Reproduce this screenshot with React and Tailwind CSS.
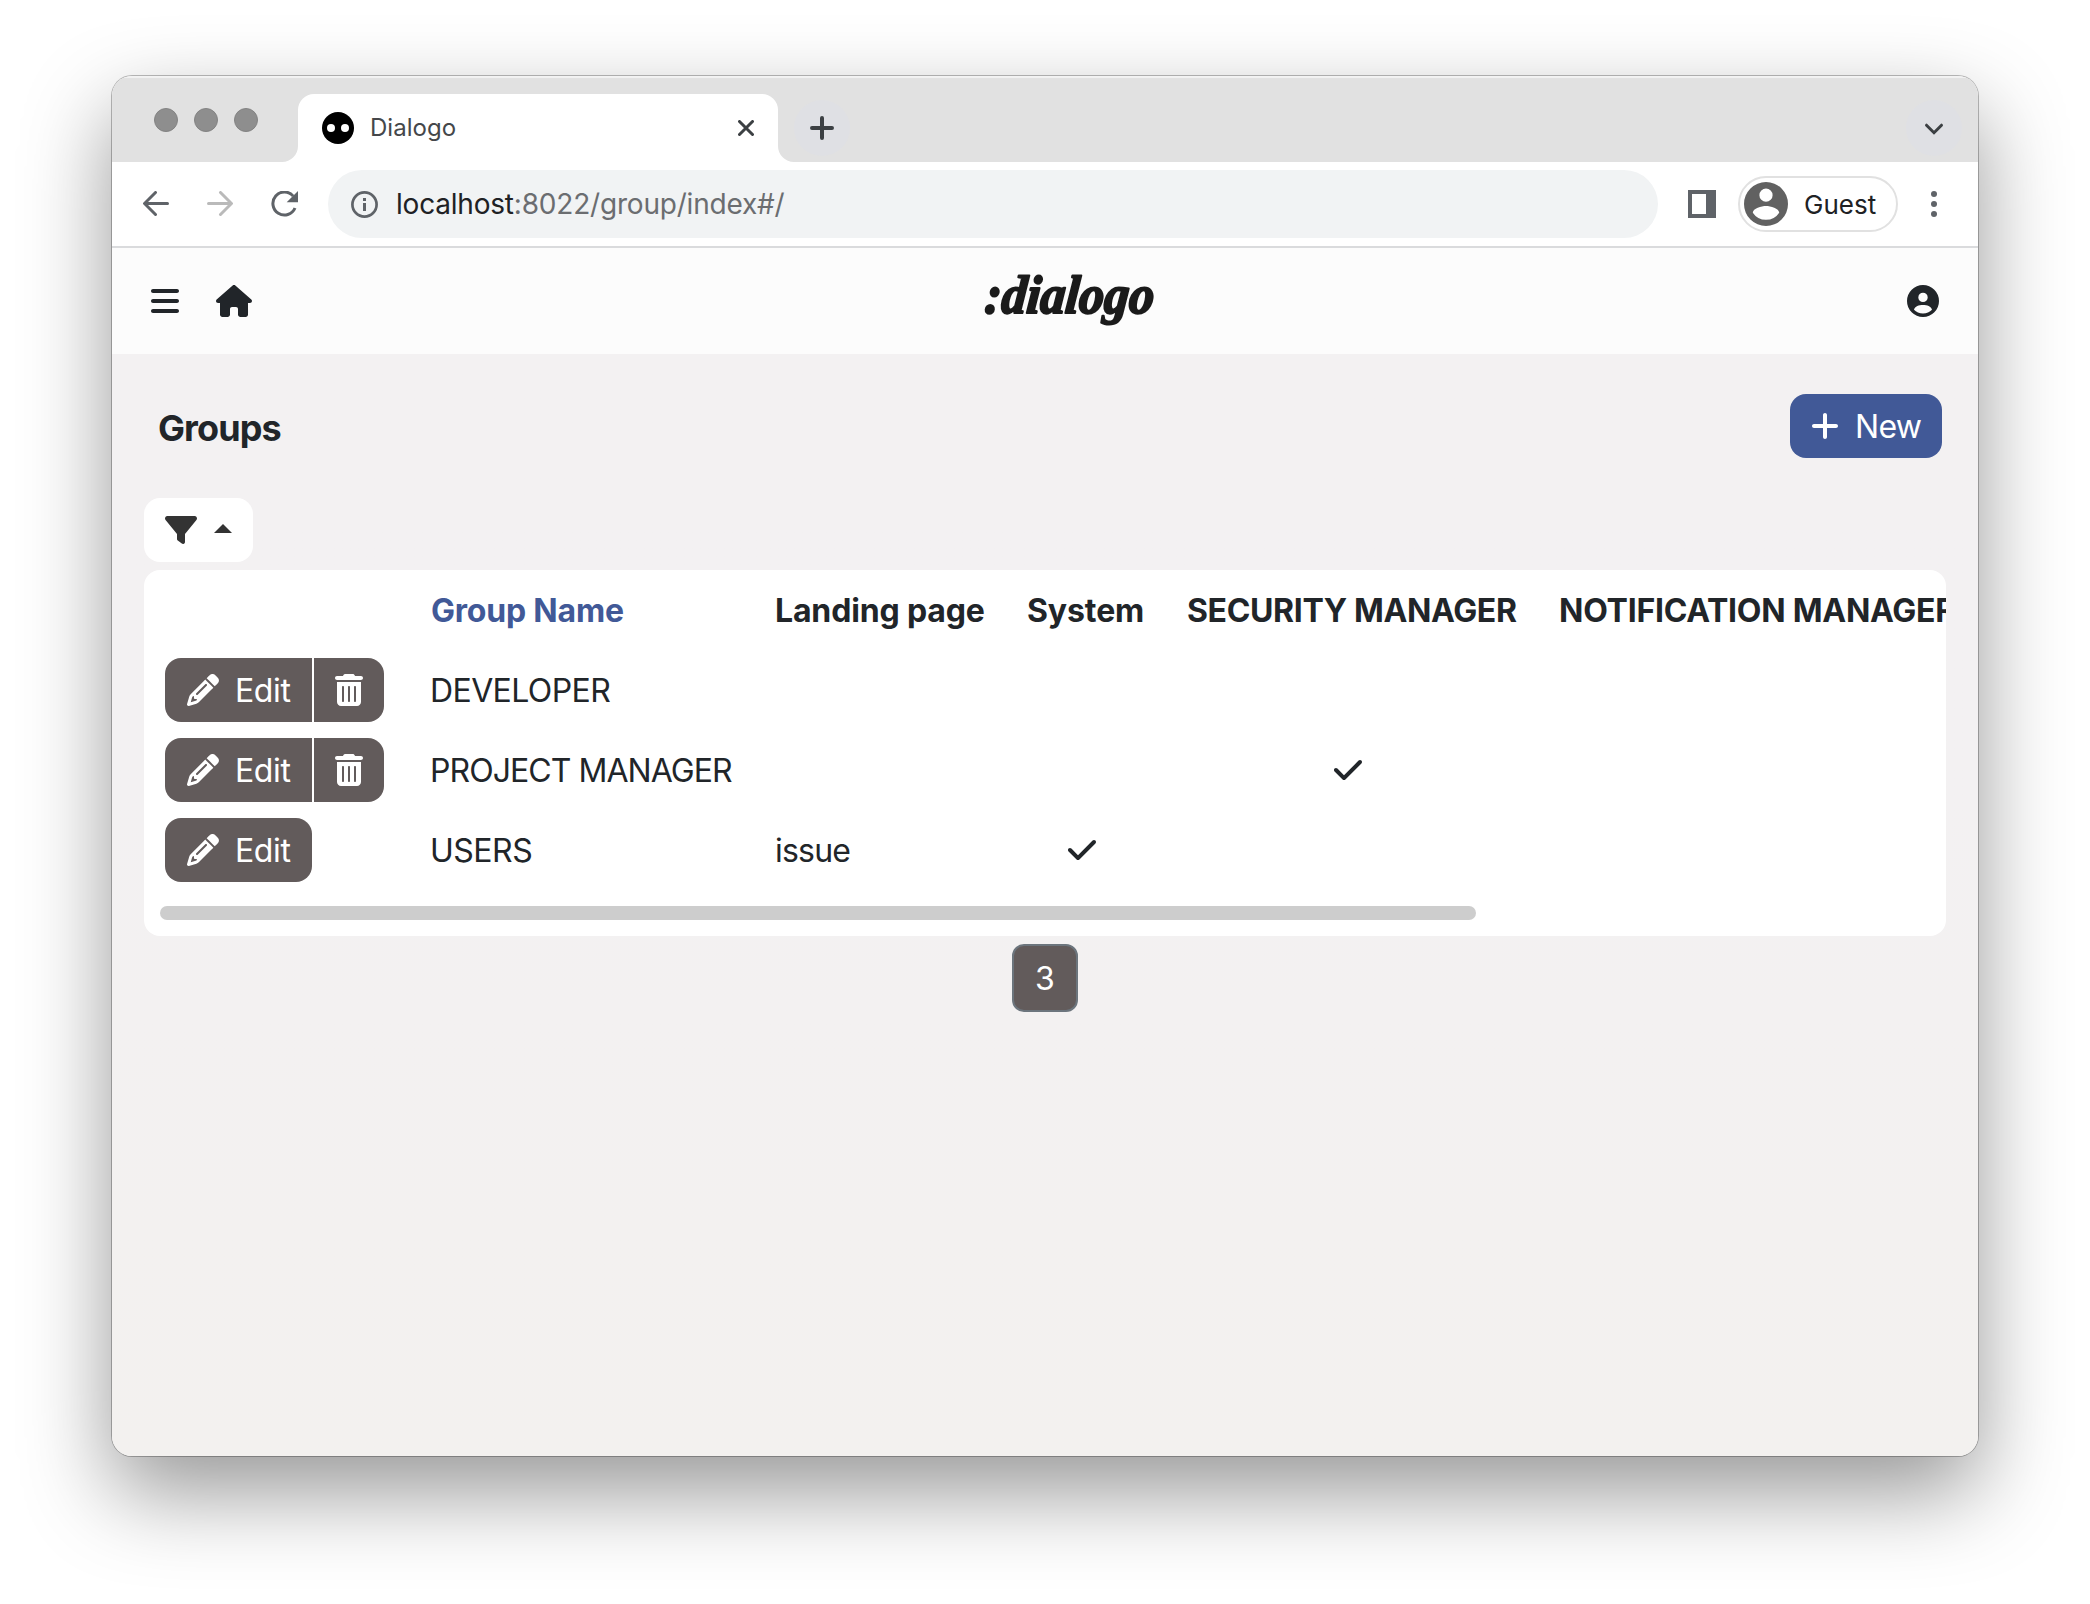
import React from "react";
import { FaBars, FaCheck, FaFilter, FaHouse, FaPencil, FaPlus, FaTrashCan } from "react-icons/fa6";

const COLUMNS = "grid grid-cols-[265px_345px_252px_160px_372px_420px] w-max h-20 items-center pl-[21px]";

const ROWS = [
  { name: "DEVELOPER", tracking: "tracking-[-0.6px]", removable: true },
  { name: "PROJECT MANAGER", tracking: "tracking-[-0.95px]", removable: true, security: true },
  { name: "USERS", tracking: "tracking-[-0.5px]", landing: "issue", system: true },
];

function TabStrip() {
  return (
    <div className="flex h-[86px] items-end bg-[#e1e1e1] pr-4 shadow-[inset_0_2px_1px_rgba(255,255,255,0.6)]">
      <div className="flex h-[86px] w-[170px] gap-4 pl-[42px] pt-8">
        <span className="size-6 rounded-full border border-[#838383] bg-[#8e8e8e]" />
        <span className="size-6 rounded-full border border-[#838383] bg-[#8e8e8e]" />
        <span className="size-6 rounded-full border border-[#838383] bg-[#8e8e8e]" />
      </div>
      <svg className="size-4 shrink-0" viewBox="0 0 16 16"><path d="M16 0v16H0A16 16 0 0 0 16 0z" fill="#fff" /></svg>
      <div className="flex h-[68px] w-[480px] items-center rounded-t-2xl bg-white px-6">
        <svg className="size-8" viewBox="0 0 32 32">
          <circle cx="16" cy="16" r="16" />
          <circle cx="9" cy="16" r="4" fill="#fff" />
          <circle cx="23" cy="16" r="4" fill="#fff" />
        </svg>
        <span className="-mt-px ml-4 text-[24px] leading-none tracking-[0.05px] text-[#45474a]">Dialogo</span>
        <svg className="ml-auto size-4" viewBox="0 0 16 16" fill="none" stroke="#3c4043" strokeWidth="3" strokeLinecap="round">
          <path d="M1.5 1.5l13 13M14.5 1.5l-13 13" />
        </svg>
      </div>
      <svg className="size-4 shrink-0" viewBox="0 0 16 16"><path d="M0 0v16h16A16 16 0 0 1 0 0z" fill="#fff" /></svg>
      <div className="mb-1.5 flex size-14 items-center justify-center rounded-full bg-[#dfe0e4]">
        <svg className="size-6" viewBox="0 0 24 24" fill="none" stroke="#3c4043" strokeWidth="4" strokeLinecap="round">
          <path d="M12 2v20M2 12h20" />
        </svg>
      </div>
      <div className="mb-1.5 ml-auto flex size-14 items-center justify-center rounded-full bg-[#dfe0e4]">
        <svg className="mt-px h-3 w-5" viewBox="0 0 20 12" fill="none" stroke="#3c4043" strokeWidth="3" strokeLinecap="round">
          <path d="M2.5 2.2l7.500 7.500 7.500-7.500" />
        </svg>
      </div>
    </div>
  );
}

function Toolbar() {
  return (
    <div className="flex h-[86px] items-center border-b-2 border-[#dadbdd] bg-white pl-[31px]">
      <svg className="size-[26px]" viewBox="0 0 26 26" fill="none" stroke="#5f6368" strokeWidth="3" strokeLinecap="round">
        <path d="M24.5 12.5h-22M12.5 1.5l-11 11 11 11" />
      </svg>
      <svg className="ml-[38px] size-[26px]" viewBox="0 0 26 26" fill="none" stroke="#bababa" strokeWidth="3" strokeLinecap="round">
        <path d="M1.5 12.5h22M13.5 1.5l11 11-11 11" />
      </svg>
      <svg className="ml-[38px] h-[26px] w-[27px]" viewBox="0 0 27 26">
        <path d="M22.2 5.1A11.5 11.5 0 1 0 24 17" fill="none" stroke="#5f6368" strokeWidth="3" />
        <path d="M27 0v11.3H15.7z" fill="#5f6368" />
      </svg>
      <div className="ml-[30px] flex h-[68px] w-[1330px] items-center rounded-full bg-[#f1f3f4] pl-[23px]">
        <svg className="size-[27px]" viewBox="0 0 27 27">
          <circle cx="13.5" cy="13.5" r="12.1" fill="none" stroke="#5f6368" strokeWidth="2.7" />
          <path d="M12 7h3v3h-3zM12 12h3v8h-3z" fill="#5f6368" />
        </svg>
        <span className="ml-[18px] text-[28px] leading-none tracking-[-0.2px] text-[#6b6d70]">
          <span className="text-[#202124]">localhost</span>:8022/group/index#/
        </span>
      </div>
      <svg className="ml-[30px] size-7" viewBox="0 0 28 28"><path fillRule="evenodd" d="M0 0h28v28H0zM4 4v20h14V4z" fill="#5f6368" /></svg>
      <div className="ml-[22px] flex h-14 w-40 items-center rounded-full border-2 border-[#e1e1e1] pl-1">
        <svg className="size-11" viewBox="2 2 20 20">
          <path fillRule="evenodd" fill="#616161" d="M12 2a10 10 0 1 0 0 20 10 10 0 0 0 0-20zm0 3a3 3 0 1 1 0 6 3 3 0 0 1 0-6zm0 14.2a7.2 7.2 0 0 1-6-3.22c.03-1.99 4-3.08 6-3.08s5.97 1.09 6 3.08a7.2 7.2 0 0 1-6 3.22z" />
        </svg>
        <span className="ml-4 mt-0.5 text-[26px] leading-none text-[#202124]">Guest</span>
      </div>
      <svg className="ml-[33px] h-[26px] w-1.5" viewBox="0 0 6 26" fill="#5f6368">
        <circle cx="3" cy="3" r="3" /><circle cx="3" cy="13" r="3" /><circle cx="3" cy="23" r="3" />
      </svg>
    </div>
  );
}

function AppHeader() {
  return (
    <header className="flex h-[106px] items-center justify-between bg-[#fcfcfc] px-[39px] text-[#212529]">
      <div className="flex items-center gap-[37px]">
        <FaBars className="h-8 w-7" />
        <FaHouse className="h-8 w-9" />
      </div>
      <svg className="h-[72px] w-[194px] overflow-visible" viewBox="0 0 194 72">
        <text x="5" y="47.500" transform="skewX(-5)" fontFamily="'Liberation Serif', serif" fontSize="54" fontWeight="700" fontStyle="italic" textLength="169" lengthAdjust="spacingAndGlyphs" fill="#1b1b1b" stroke="#1b1b1b" strokeWidth="2.2" strokeLinejoin="round">:dialogo</text>
      </svg>
      <svg className="size-8" viewBox="0 0 32 32">
        <path fillRule="evenodd" fill="#212529" d="M16 0a16 16 0 1 0 0 32 16 16 0 0 0 0-32zm0 7.7a4.7 4.7 0 1 1 0 9.4 4.7 4.7 0 0 1 0-9.4zm0 20.800c-3.600 0-6.800-1.400-9-3.800 1-3.300 4.800-4.700 9-4.700s8 1.400 9 4.700c-2.200 2.400-5.400 3.800-9 3.800z" />
      </svg>
    </header>
  );
}

function RowActions({ removable }) {
  return (
    <div className="flex h-16 gap-0.5 text-white">
      <button className={`flex w-[147px] items-center bg-[#625b5b] pl-[22px] ${removable ? "rounded-l-2xl" : "rounded-2xl"}`}>
        <FaPencil className="size-8" />
        <span className="ml-4 mt-0.5 tracking-[-0.4px]">Edit</span>
      </button>
      {removable && (
        <button className="flex w-[70px] items-center justify-center rounded-r-2xl bg-[#625b5b]">
          <FaTrashCan className="h-8 w-7" />
        </button>
      )}
    </div>
  );
}

function GroupsTable() {
  return (
    <div className="mt-2 h-[366px] overflow-hidden rounded-2xl bg-white">
      <div className={`${COLUMNS} whitespace-nowrap pt-0.5 font-bold`}>
        <span />
        <span className="pl-px tracking-[-0.2px] text-[#415997]">Group Name</span>
        <span className="tracking-[-0.15px]">Landing page</span>
        <span className="tracking-[-0.1px]">System</span>
        <span className="tracking-[-0.35px]">SECURITY MANAGER</span>
        <span className="tracking-[-0.25px]">NOTIFICATION MANAGER</span>
      </div>
      {ROWS.map((row) => (
        <div key={row.name} className={COLUMNS}>
          <RowActions removable={row.removable} />
          <span className={`mt-0.5 ${row.tracking}`}>{row.name}</span>
          <span className="mt-0.5 tracking-[-0.8px]">{row.landing}</span>
          <span className="pl-[41px]">{row.system && <FaCheck className="h-8 w-7" />}</span>
          <span className="pl-[147px]">{row.security && <FaCheck className="h-8 w-7" />}</span>
          <span />
        </div>
      ))}
      <div className="ml-4 mt-4 h-3.5 w-[1316px] rounded-full bg-[#cdcdcd]" />
    </div>
  );
}

export default function App() {
  return (
    <div className="h-[1604px] w-[2090px] overflow-hidden bg-white pl-28 pt-[76px] font-[Inter,sans-serif] text-[32px] text-[#212529]">
      <div className="h-[1380px] w-[1866px] rounded-[20px] shadow-[0_0_0_1px_rgba(0,0,0,0.26),0_36px_88px_rgba(0,0,0,0.41)]">
        <div className="flex h-full flex-col overflow-hidden rounded-[20px]">
          <TabStrip />
          <Toolbar />
          <AppHeader />
          <main className="flex-1 bg-linear-to-b from-[#f3f1f2] from-40% to-[#f3f1ef] px-8 pt-10">
            <div className="flex h-16 items-center justify-between pl-3.5 pr-1">
              <h1 className="mt-1 text-[36px] font-bold leading-none tracking-[-0.9px]">Groups</h1>
              <button className="flex h-16 w-[152px] items-center rounded-2xl bg-[#415997] pl-[21px] text-white">
                <FaPlus className="h-8 w-7" />
                <span className="ml-4 mt-0.5 tracking-[-0.7px]">New</span>
              </button>
            </div>
            <button className="mt-10 flex h-16 w-[109px] items-center gap-[17px] rounded-2xl bg-white pl-[21px] text-[#333]">
              <FaFilter className="size-8" />
              <svg className="-mt-[3px] h-[9px] w-[18px]" viewBox="0 0 18 9"><path d="M0 9l9-9 9 9z" fill="currentColor" /></svg>
            </button>
            <GroupsTable />
            <div className="mt-2 flex justify-center">
              <span className="flex h-[68px] w-[66px] items-center justify-center rounded-xl border-2 border-[#6c757d] bg-[#625b5b] pt-0.5 text-white">3</span>
            </div>
          </main>
        </div>
      </div>
    </div>
  );
}
